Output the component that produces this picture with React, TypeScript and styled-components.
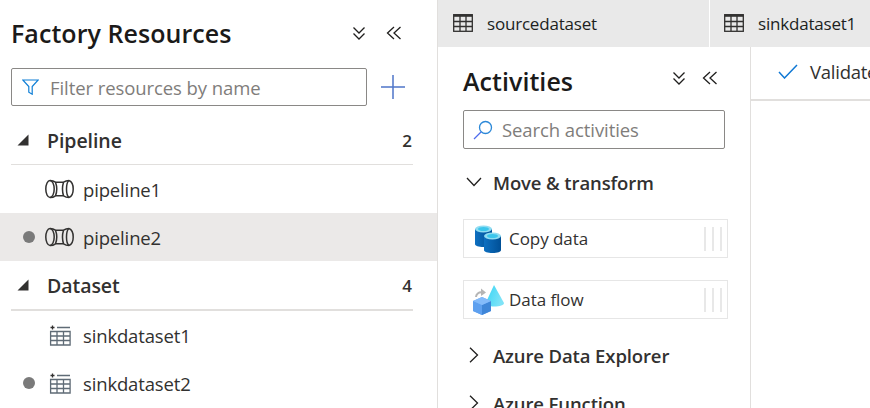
import React from "react";
import styled, { createGlobalStyle } from "styled-components";

const Global = createGlobalStyle`
  html, body { margin: 0; padding: 0; width: 870px; height: 408px; overflow: hidden; background: #fff; }
  * { box-sizing: border-box; }
  svg { flex: none; display: block; }
  body { font-family: "Open Sans", "Noto Sans", "Liberation Sans", sans-serif; color: #323130; }
`;

const Page = styled.div`
  display: flex; width: 870px; height: 408px; overflow: hidden;
`;
const Resources = styled.aside`
  flex: 0 0 438px; height: 408px; border-right: 1px solid #e1dfdd; display: flex; flex-direction: column; overflow: hidden;
`;
const ResHeader = styled.div`
  display: flex; align-items: center; height: 68px; padding: 0 0 2px 11px;
`;
const Title = styled.h1<{ $size: number; $pt?: number }>`
  margin: 0; font-size: ${p => p.$size}px; font-weight: 600; color: #1b1a19; letter-spacing: 0.05px; line-height: 34px; white-space: nowrap; padding-top: ${p => p.$pt ?? 0}px;
`;
const HeadIcons = styled.div<{ $gap: number; $left: number }>`
  margin-left: ${p => p.$left}px; display: flex; gap: ${p => p.$gap}px; align-items: center; flex: none;
`;
const FilterRow = styled.div`
  display: flex; align-items: center; padding-left: 11px; height: 38px; flex: none;
`;
const SearchBox = styled.div<{ $w: number; $h: number; $pl: number; $gap: number }>`
  display: flex; align-items: center; width: ${p => p.$w}px; height: ${p => p.$h}px; flex: none; border: 1px solid #8a8886; border-radius: 2px; padding-left: ${p => p.$pl}px; gap: ${p => p.$gap}px; font-size: 18.5px; color: #7f7d7b; letter-spacing: -0.08px; white-space: nowrap;
`;
const AddBtn = styled.div`
  margin-left: 14px; display: flex;
`;
const GroupHead = styled.div<{ $line: number; $h: number; $pt: number }>`
  display: flex; align-items: center; height: ${p => p.$h}px; flex: none; margin: 0 24px 0 11px; border-bottom: ${p => p.$line}px solid #e1dfdd; padding: ${p => p.$pt}px 1px 0 6px; font-size: 19.5px; font-weight: 600; color: #323130; letter-spacing: -0.05px;
`;
const GroupName = styled.span`
  margin-left: 18px; flex: 1;
`;
const Count = styled.span`
  font-size: 17px;
`;
const Row = styled.div<{ $active?: boolean }>`
  display: flex; align-items: center; height: 48px; flex: none; background: ${p => (p.$active ? "#ebe9e8" : "transparent")}; font-size: 18.5px; color: #323130; letter-spacing: -0.15px; width: 437px;
`;
const DotSlot = styled.span`
  width: 45px; flex: none; display: flex; justify-content: flex-end; padding-right: 10px;
`;
const Dot = styled.span`
  width: 12px; height: 12px; border-radius: 50%; background: #7a7a7a;
`;
const IconSlot = styled.span`
  width: 29px; flex: none; display: flex; justify-content: center;
`;
const RowLabel = styled.span`
  margin-left: 9px;
`;
const Main = styled.div`
  flex: 1; display: flex; flex-direction: column; min-width: 0;
`;
const Tabs = styled.div`
  display: flex; height: 47px; background: #e9e9e9; flex: none;
`;
const Tab = styled.div<{ $w: number; $pl: number; $divider?: boolean }>`
  width: ${p => p.$w}px; flex: none; display: flex; align-items: center; gap: 14px; padding-left: ${p => p.$pl}px; padding-bottom: 1px; font-size: 17px; color: #201f1e; letter-spacing: -0.2px; white-space: nowrap; border-right: ${p => (p.$divider ? "1px solid #fff" : "none")};
`;
const Body = styled.div`
  flex: 1; display: flex; min-height: 0;
`;
const Activities = styled.section`
  flex: 0 0 313px; border-right: 1px solid #e1dfdd; padding-left: 25px; display: flex; flex-direction: column; overflow: hidden;
`;
const ActHead = styled.div`
  display: flex; align-items: center; height: 63px; flex: none; padding-bottom: 5px; padding-top: 3px;
`;
const Section = styled.div<{ $h: number; $pb?: number }>`
  display: flex; align-items: center; gap: 11px; height: ${p => p.$h}px; flex: none; padding-left: 3px; padding-bottom: ${p => p.$pb ?? 0}px; font-size: 18.5px; font-weight: 600; color: #323130; letter-spacing: -0.12px; white-space: nowrap;
`;
const Card = styled.div<{ $mb: number }>`
  display: flex; align-items: center; width: 265px; height: 39px; flex: none; border: 1px solid #e6e6e6; margin-bottom: ${p => p.$mb}px; padding-left: 9px; font-size: 17px; color: #323130; letter-spacing: -0.05px; white-space: nowrap;
`;
const CardIcon = styled.span`
  width: 30px; flex: none; display: flex; justify-content: center;
`;
const CardLabel = styled.span`
  margin-left: 6px; flex: 1;
`;
const Grip = styled.span`
  display: flex; gap: 6px; margin-right: 5px; height: 24px;
`;
const GripBar = styled.i`
  width: 2px; height: 100%; background: #e8e8e8; display: block;
`;
const Canvas = styled.div`
  flex: 1; min-width: 0; overflow: hidden;
`;
const Toolbar = styled.div`
  height: 54px; border-bottom: 2px solid #e1dfdd; display: flex; align-items: center; gap: 12px; padding: 0 0 3px 27px; font-size: 18.5px; color: #323130; letter-spacing: -0.25px; white-space: nowrap;
`;

const DoubleDown = () => (
  <svg width="16" height="16" viewBox="0 0 16 16" fill="none" stroke="#201f1e" strokeWidth="1.3">
    <path d="M2.5 2.5 8 8l5.5-5.500M2.5 8.500 8 14l5.500-5.500" />
  </svg>
);
const DoubleLeft = () => (
  <svg width="16" height="16" viewBox="0 0 16 16" fill="none" stroke="#201f1e" strokeWidth="1.3">
    <path d="M8 2 1.500 8 8 14M14.500 2 8 8l6.500 6" />
  </svg>
);
const Funnel = () => (
  <svg width="17" height="16" viewBox="0 0 17 16" fill="none" stroke="#0f7fd6" strokeWidth="1.2">
    <path d="M.8 1h15.400l-6 6.600v7.600l-3.400-2V7.600z" />
  </svg>
);
const Plus = () => (
  <svg width="24" height="24" viewBox="0 0 24 24" stroke="#4f76c9" strokeWidth="1.5">
    <path d="M0 12h24M12 0v24" />
  </svg>
);
const Caret = () => (
  <svg width="12" height="12" viewBox="0 0 12 12"><path d="M11.500.5v11H.5z" fill="#323130" /></svg>
);
const PipelineIcon = () => (
  <svg width="29" height="20" viewBox="0 0 29 20" fill="none" stroke="#323130" strokeWidth="1.5">
    <ellipse cx="5" cy="10" rx="4.200" ry="8.500" />
    <path d="M5 1.500c2 0 4 .6 5.500 1.700h8c1.500-1 3.500-1.700 5.500-1.700M5 18.500c2 0 4-.6 5.500-1.700h8c1.500 1 3.500 1.700 5.500 1.700M10.500 3.200c1.500 4 1.500 9.600 0 13.600" />
    <path d="M18.500 3.200c-1.200 4-1.200 9.600 0 13.600M24 1.500c2.700 1 4.200 4.500 4.200 8.500s-1.500 7.500-4.200 8.500M24 1.500c-2 1.500-2.500 5-2.500 8.500s.5 7 2.500 8.500" />
  </svg>
);
const DatasetIcon = () => (
  <svg width="22" height="21" viewBox="0 0 22 21" fill="none" stroke="#5f6b76" strokeWidth="1.3">
    <path d="M1.600 6.500h19.500v13.500H1.600zM1.600 11h19.500M1.600 15.500h19.500M8 6.500V20M14.500 6.500V20M8 2.500h13" />
    <path d="M3.500.5v4M1.500 2.500h4" stroke="#323130" />
  </svg>
);
const TableIcon = () => (
  <svg width="20" height="18" viewBox="0 0 20 18" fill="none" stroke="#323130" strokeWidth="1.3">
    <rect x=".7" y=".7" width="18.600" height="16.600" />
    <path d="M.7 1.700h18.600" strokeWidth="2.200" />
    <path d="M.7 7.500h18.600M.7 12.500h18.600M7 2v15M13 2v15" />
  </svg>
);
const Magnifier = () => (
  <svg width="20" height="20" viewBox="0 0 20 20" fill="none" strokeWidth="1.3">
    <circle cx="12.500" cy="7.500" r="6" stroke="#2b88d8" />
    <path d="M8 12 1 19" stroke="#4f6bed" />
  </svg>
);
const Check = () => (
  <svg width="20" height="15" viewBox="0 0 20 15" fill="none" stroke="#0f78d4" strokeWidth="1.500">
    <path d="M1 8l5.500 6L19 1" />
  </svg>
);
const ChevronDown = () => (
  <svg width="16" height="10" viewBox="0 0 16 10" fill="none" stroke="#201f1e" strokeWidth="1.300">
    <path d="M1 1l7 7.500L15 1" />
  </svg>
);
const ChevronRight = () => (
  <svg width="16" height="16" viewBox="0 0 16 16" fill="none" stroke="#201f1e" strokeWidth="1.300">
    <path d="M4 .7 11.500 8 4 15.300" />
  </svg>
);
const CopyIcon = () => (
  <svg width="26" height="28" viewBox="0 0 26 28">
    <defs>
      <linearGradient id="cyl" x1="0" x2="1" y1="0" y2="0">
        <stop offset="0" stopColor="#0d6fc0" />
        <stop offset="1" stopColor="#004f96" />
      </linearGradient>
    </defs>
    <path d="M0 4h17v15c0 2-3.500 3-8.500 3S0 21 0 19z" fill="url(#cyl)" />
    <ellipse cx="8.500" cy="4" rx="8.500" ry="3.500" fill="#8fdcf2" />
    <ellipse cx="8.500" cy="4" rx="5.500" ry="2" fill="#3cc6ec" />
    <path d="M9 11h17v14c0 2-3.500 3-8.500 3S9 27 9 25z" fill="url(#cyl)" />
    <ellipse cx="17.500" cy="11" rx="8.500" ry="3.500" fill="#8fdcf2" />
    <ellipse cx="17.500" cy="11" rx="5.500" ry="2" fill="#3cc6ec" />
  </svg>
);
const FlowIcon = () => (
  <svg width="31" height="30" viewBox="0 0 31 30">
    <defs>
      <linearGradient id="cone" x1="0" x2="1" y1="0" y2="0.4">
        <stop offset="0" stopColor="#32d4f5" />
        <stop offset="1" stopColor="#7fe3f7" />
      </linearGradient>
    </defs>
    <path d="M21 0 31 18c0 2-4 3.500-10 3.500-4 0-8-.8-9-2z" fill="url(#cone)" />
    <path d="M3 12c.2-3 2.500-5 6-4.700" fill="none" stroke="#b5b5b5" strokeWidth="2" />
    <path d="M8 3.500 13 7.500 8 11z" fill="#b5b5b5" />
    <path d="M9 12l9 4v10l-9 4-9-4V16z" fill="#6aa8f5" />
    <path d="M9 20v10l-9-4V16z" fill="#5ea0ef" />
    <path d="M9 20l9-4v10l-9 4z" fill="#3f86d8" />
    <path d="M9 12l9 4-9 4-9-4z" fill="#84bbfa" />
  </svg>
);

export default function App() {
  return (
    <Page>
      <Global />
      <Resources>
        <ResHeader>
          <Title $size={25}>Factory Resources</Title>
          <HeadIcons $gap={19} $left={120}>
            <DoubleDown />
            <DoubleLeft />
          </HeadIcons>
        </ResHeader>
        <FilterRow>
          <SearchBox $w={356} $h={38} $pl={10} $gap={11}>
            <Funnel />
            Filter resources by name
          </SearchBox>
          <AddBtn><Plus /></AddBtn>
        </FilterRow>
        <GroupHead $line={1} $h={59} $pt={10}>
          <Caret />
          <GroupName>Pipeline</GroupName>
          <Count>2</Count>
        </GroupHead>
        <Row>
          <DotSlot />
          <IconSlot><PipelineIcon /></IconSlot>
          <RowLabel>pipeline1</RowLabel>
        </Row>
        <Row $active>
          <DotSlot><Dot /></DotSlot>
          <IconSlot><PipelineIcon /></IconSlot>
          <RowLabel>pipeline2</RowLabel>
        </Row>
        <GroupHead $line={2} $h={50} $pt={0}>
          <Caret />
          <GroupName>Dataset</GroupName>
          <Count>4</Count>
        </GroupHead>
        <Row>
          <DotSlot />
          <IconSlot><DatasetIcon /></IconSlot>
          <RowLabel>sinkdataset1</RowLabel>
        </Row>
        <Row>
          <DotSlot><Dot /></DotSlot>
          <IconSlot><DatasetIcon /></IconSlot>
          <RowLabel>sinkdataset2</RowLabel>
        </Row>
      </Resources>
      <Main>
        <Tabs>
          <Tab $w={272} $pl={15} $divider><TableIcon />sourcedataset</Tab>
          <Tab $w={160} $pl={14}><TableIcon />sinkdataset1</Tab>
        </Tabs>
        <Body>
          <Activities>
            <ActHead>
              <Title $size={25} $pt={6}>Activities</Title>
              <HeadIcons $gap={15} $left={98}>
                <DoubleDown />
                <DoubleLeft />
              </HeadIcons>
            </ActHead>
            <SearchBox $w={262} $h={39} $pl={9} $gap={9}>
              <Magnifier />
              Search activities
            </SearchBox>
            <Section $h={70} $pb={4}><ChevronDown />Move &amp; transform</Section>
            <Card $mb={22}>
              <CardIcon><CopyIcon /></CardIcon>
              <CardLabel>Copy data</CardLabel>
              <Grip><GripBar /><GripBar /><GripBar /></Grip>
            </Card>
            <Card $mb={13}>
              <CardIcon><FlowIcon /></CardIcon>
              <CardLabel>Data flow</CardLabel>
              <Grip><GripBar /><GripBar /><GripBar /></Grip>
            </Card>
            <Section $h={48} $pb={2}><ChevronRight />Azure Data Explorer</Section>
            <Section $h={48} $pb={2}><ChevronRight />Azure Function</Section>
          </Activities>
          <Canvas>
            <Toolbar><Check />Validate</Toolbar>
          </Canvas>
        </Body>
      </Main>
    </Page>
  );
}
